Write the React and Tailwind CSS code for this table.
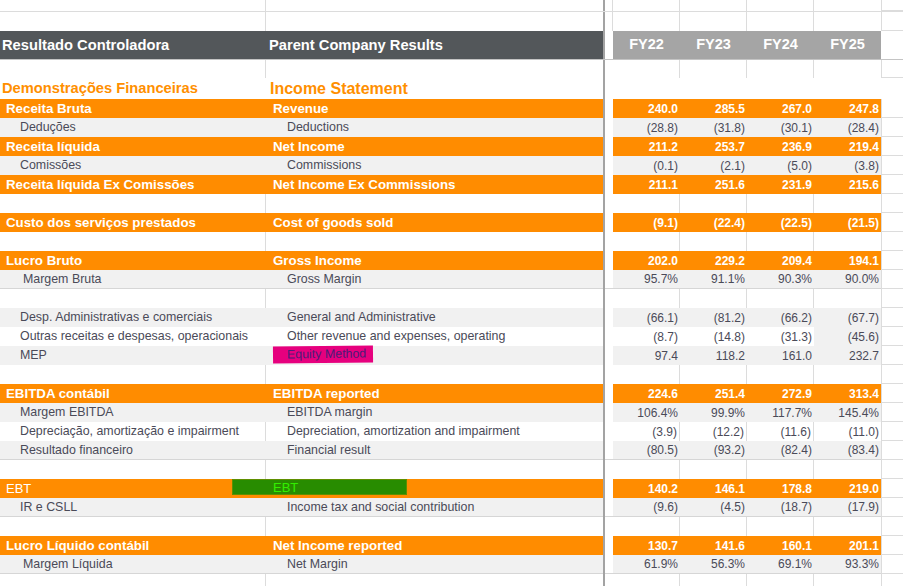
const FONT = { fontFamily: '"Liberation Sans", Arial, sans-serif' };

const rows = [
  { t: "o", a: "Receita Bruta", b: "Revenue", v: ["240.0", "285.5", "267.0", "247.8"] },
  { t: "g", a: "Deduções", b: "Deductions", v: ["(28.8)", "(31.8)", "(30.1)", "(28.4)"] },
  { t: "o", a: "Receita líquida", b: "Net Income", v: ["211.2", "253.7", "236.9", "219.4"] },
  { t: "g", a: "Comissões", b: "Commissions", v: ["(0.1)", "(2.1)", "(5.0)", "(3.8)"] },
  { t: "o", a: "Receita líquida Ex Comissões", b: "Net Income Ex Commissions", v: ["211.1", "251.6", "231.9", "215.6"] },
  { t: "blank" },
  { t: "o", a: "Custo dos serviços prestados", b: "Cost of goods sold", v: ["(9.1)", "(22.4)", "(22.5)", "(21.5)"] },
  { t: "blank" },
  { t: "o", a: "Lucro Bruto", b: "Gross Income", v: ["202.0", "229.2", "209.4", "194.1"] },
  { t: "g", a: "Margem Bruta", b: "Gross Margin", v: ["95.7%", "91.1%", "90.3%", "90.0%"], wide: true, line: true },
  { t: "blank" },
  { t: "g", a: "Desp. Administrativas e comerciais", b: "General and Administrative", v: ["(66.1)", "(81.2)", "(66.2)", "(67.7)"] },
  { t: "w", a: "Outras receitas e despesas, operacionais", b: "Other revenue and expenses, operating", v: ["(8.7)", "(14.8)", "(31.3)", "(45.6)"], lastGray: true },
  { t: "g", a: "MEP", b: "", v: ["97.4", "118.2", "161.0", "232.7"], pink: true },
  { t: "blank" },
  { t: "o", a: "EBITDA contábil", b: "EBITDA reported", v: ["224.6", "251.4", "272.9", "313.4"] },
  { t: "g", a: "Margem EBITDA", b: "EBITDA margin", v: ["106.4%", "99.9%", "117.7%", "145.4%"] },
  { t: "w", a: "Depreciação, amortização e impairment", b: "Depreciation, amortization and impairment", v: ["(3.9)", "(12.2)", "(11.6)", "(11.0)"], grid: true },
  { t: "g", a: "Resultado financeiro", b: "Financial result", v: ["(80.5)", "(93.2)", "(82.4)", "(83.4)"], line: true },
  { t: "blank" },
  { t: "o", a: "EBT", b: "", v: ["140.2", "146.1", "178.8", "219.0"], green: true },
  { t: "g", a: "IR e CSLL", b: "Income tax and social contribution", v: ["(9.6)", "(4.5)", "(18.7)", "(17.9)"], line: true },
  { t: "blank" },
  { t: "o", a: "Lucro Líquido contábil", b: "Net Income reported", v: ["130.7", "141.6", "160.1", "201.1"] },
  { t: "g", a: "Margem Líquida", b: "Net Margin", v: ["61.9%", "56.3%", "69.1%", "93.3%"], wide: true, line: true },
];

function Sep() {
  return <div className="w-[2px] shrink-0 bg-[#a3a3a3]" />;
}

function BlankRow({ h = "h-[19px]", top }) {
  return (
    <div className={`flex ${h}`}>
      <div className="w-[266px] shrink-0 border-r border-[#dcdcdc]" />
      <div className="w-[337px] shrink-0" />
      <Sep />
      <div className={`w-[8px] shrink-0 ${top ? "border-r border-[#dcdcdc]" : ""}`} />
      <div className="w-[67px] shrink-0 border-r border-[#dcdcdc]" />
      <div className="w-[67px] shrink-0 border-r border-[#dcdcdc]" />
      <div className="w-[67px] shrink-0 border-r border-[#dcdcdc]" />
      <div className="w-[67px] shrink-0" />
      <div className="w-[22px] shrink-0 border-l border-b border-[#dcdcdc]" />
    </div>
  );
}

function DataRow({ r }) {
  if (r.t === "blank") return <BlankRow />;
  const orange = r.t === "o";
  const gray = r.t === "g";
  const line = r.line ? "border-b border-[#d6d6d6]" : "";
  const labelBg = orange ? "bg-[#ff8c00] text-white" : gray ? "bg-[#f1f1f1] text-[#4a4a58]" : "bg-white text-[#4a4a58]";
  const weight = orange && !r.green ? "font-bold text-[13.3px]" : orange ? "text-[13px]" : "text-[12.4px]";

  return (
    <div className="relative flex h-[19px]">
      <div className={`flex w-[603px] shrink-0 ${labelBg} ${line} ${weight}`}>
        <div
          className={`flex w-[266px] shrink-0 items-center whitespace-nowrap ${
            orange ? "pl-[6px]" : r.wide ? "pl-[23px]" : "pl-[20px]"
          } ${r.grid ? "border-r border-[#dcdcdc]" : ""}`}
        >
          {r.a}
        </div>
        <div className={`flex w-[337px] shrink-0 items-center whitespace-nowrap ${orange ? "pl-[7px]" : "pl-[21px]"}`}>
          {r.b}
        </div>
      </div>
      <Sep />
      <div className={`w-[8px] shrink-0 ${line}`} />
      <div className={`flex w-[268px] shrink-0 ${line}`}>
        {r.v.map((x, i) => {
          const bg = orange
            ? "bg-[#ff8c00] text-white font-bold text-[12px]"
            : gray || (r.lastGray && i === 3)
            ? "bg-[#f1f1f1] text-[#4a4a58] text-[12px]"
            : "bg-white text-[#4a4a58] text-[12px]";
          const gl = r.grid && i < 3 ? "border-r border-[#dcdcdc]" : "";
          return (
            <div key={i} className={`flex w-[67px] shrink-0 items-center justify-end pr-[2px] ${bg} ${gl}`}>
              {x}
            </div>
          );
        })}
      </div>
      <div className="w-[22px] shrink-0 border-l border-b border-[#dcdcdc]" />

      {/* marcações coloridas sobre a planilha */}
      {r.pink && (
        <div className="absolute left-[273px] top-0 flex h-[17px] w-[100px] -rotate-[0.6deg] items-center bg-[#e6007e] pl-[14px] text-[12.4px] text-[#4b1d78]">
          Equity Method
        </div>
      )}
      {r.green && (
        <div className="absolute left-[232px] top-0 flex h-[16px] w-[175px] items-center border border-[#5f8f00] bg-[#288c00] pl-[40px] pt-[2px] text-[13px] text-[#33ee00]">
          EBT
        </div>
      )}
    </div>
  );
}

export default function App() {
  return (
    <div className="h-[586px] w-[903px] overflow-hidden bg-white" style={FONT}>
      {/* linhas do topo */}
      <div className="border-b border-[#dcdcdc]">
        <BlankRow h="h-[11px]" top />
      </div>
      <BlankRow h="h-[19px]" top />

      {/* cabeçalho */}
      <div className="flex h-[28px]">
        <div className="flex w-[603px] shrink-0 items-center bg-[#53575a] text-[14.7px] font-bold text-white">
          <div className="w-[266px] shrink-0 pl-[2px]">Resultado Controladora</div>
          <div className="w-[337px] shrink-0 pl-[3px]">Parent Company Results</div>
        </div>
        <Sep />
        <div className="w-[8px] shrink-0" />
        <div className="flex w-[268px] shrink-0 bg-[#a5a5a5] text-[14.5px] font-bold text-white">
          {["FY22", "FY23", "FY24", "FY25"].map((y) => (
            <div key={y} className="flex w-[67px] items-center justify-center">
              {y}
            </div>
          ))}
        </div>
        <div className="w-[22px] shrink-0" />
      </div>
      <div className="h-px w-full bg-[#c4c4c4]" />
      <BlankRow h="h-[18px]" />

      {/* títulos */}
      <div className="flex h-[21px] font-bold text-[#ff8f00]">
        <div className="flex w-[266px] shrink-0 items-end pb-[3px] pl-[2px] text-[14.7px] leading-none">
          Demonstrações Financeiras
        </div>
        <div className="flex w-[337px] shrink-0 items-end pb-[2px] pl-[4px] text-[16px] leading-none">
          Income Statement
        </div>
        <Sep />
        <div className="flex-1" />
      </div>

      {rows.map((r, i) => (
        <DataRow key={i} r={r} />
      ))}
      <BlankRow h="h-[13px]" />
    </div>
  );
}
